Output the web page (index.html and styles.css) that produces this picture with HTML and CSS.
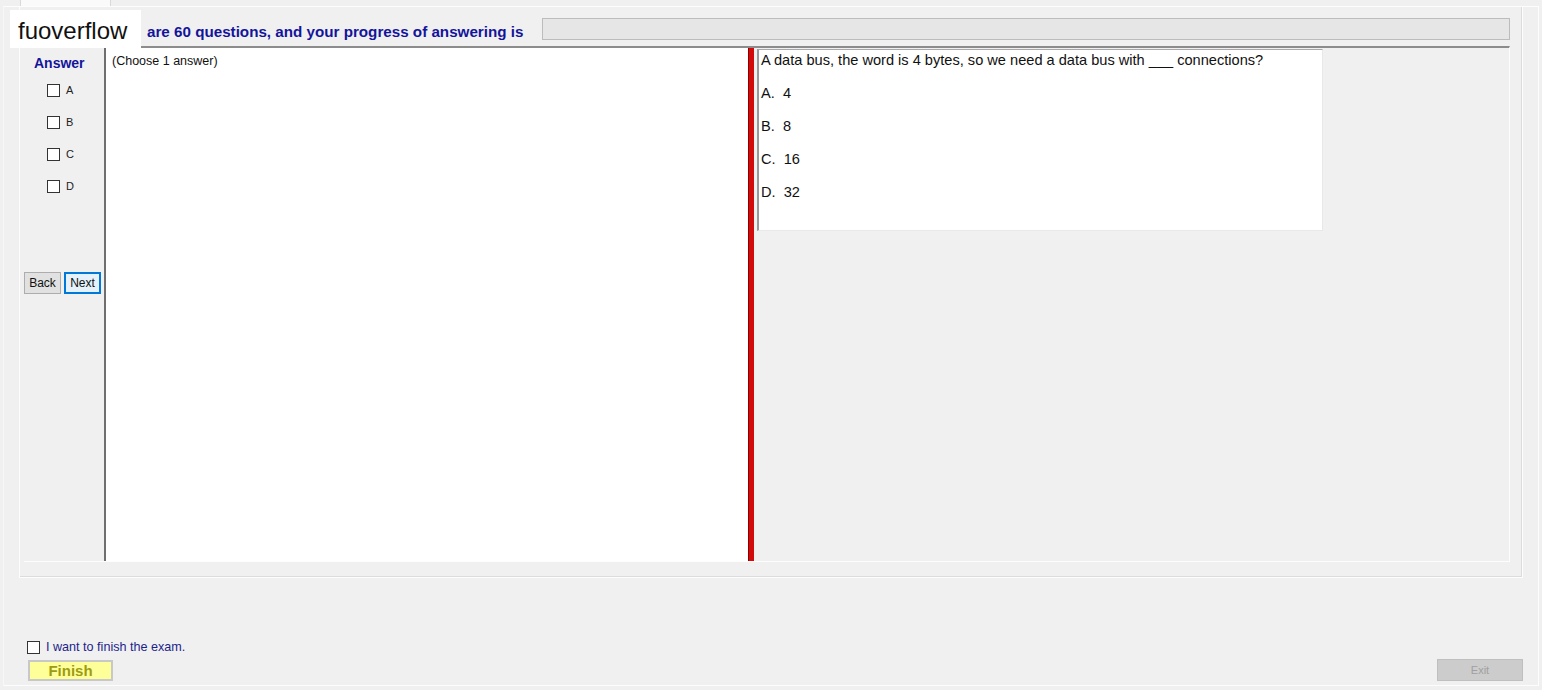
FILE: index.html
```html
<!DOCTYPE html>
<html>
<head>
  <title>Exam</title>
  <link rel="stylesheet" href="styles.css">
</head>
<body>
  <div class="tabstrip">
    <div class="tab"></div>
  </div>
  <div class="tabpage">
    <div class="group">
      <div class="header">
        <div class="title">are 60 questions, and your progress of answering is</div>
        <div class="progress"></div>
      </div>
      <div class="split">
        <div class="answer-panel">
          <div class="answer-title">Answer</div>
          <div class="options">
            <label class="option"><span class="box"></span>A</label>
            <label class="option"><span class="box"></span>B</label>
            <label class="option"><span class="box"></span>C</label>
            <label class="option"><span class="box"></span>D</label>
          </div>
          <div class="nav">
            <button class="btn">Back</button>
            <button class="btn focused">Next</button>
          </div>
        </div>
        <div class="answer-text">(Choose 1 answer)</div>
        <div class="splitter"></div>
        <div class="question-panel">
          <div class="question">
            <p>A data bus, the word is 4 bytes, so we need a data bus with ___ connections?</p>
            <p>A.&nbsp; 4</p>
            <p>B.&nbsp; 8</p>
            <p>C.&nbsp; 16</p>
            <p>D.&nbsp; 32</p>
          </div>
        </div>
      </div>
    </div>
    <div class="footer">
      <div class="finish-area">
        <label class="finish-check"><span class="box"></span>I want to finish the exam.</label>
        <button class="finish">Finish</button>
      </div>
      <button class="exit">Exit</button>
    </div>
  </div>
  <div class="watermark">fuoverflow</div>
</body>
</html>
```

FILE: styles.css
```css
body {
  margin: 0;
  background-color: #f0f0f0;
  font-family: "Liberation Sans", Arial, sans-serif;
  width: 1542px;
  height: 690px;
  overflow: hidden;
  position: relative;
}
.tabstrip {
  height: 6px;
  padding-left: 20px;
}
.tab {
  width: 89px;
  height: 6px;
  background-color: #fafafa;
  border-left: 1px solid #d9d9d9;
  border-right: 1px solid #d9d9d9;
}
.tabpage {
  margin: 0 3px;
  height: 680px;
  border-left: 1px solid #f7f7f7;
  border-right: 1px solid #fdfdfd;
  border-bottom: 1px solid #fdfdfd;
  border-top: 1px solid #fdfdfd;
  box-sizing: border-box;
  padding: 0 15px;
}
.group {
  height: 571px;
  box-sizing: border-box;
  border: 1px solid #fdfdfd;
  border-top: none;
  box-shadow: inset -1px -1px 0 #dcdcdc;
  padding: 11px 12px 0 4px;
}
.header {
  display: flex;
  height: 22px;
  align-items: center;
}
.title {
  flex: 1;
  padding-left: 123px;
  padding-top: 5px;
  font-size: 15.2px;
  font-weight: bold;
  color: #14149b;
  white-space: nowrap;
  overflow: hidden;
}
.progress {
  width: 966px;
  height: 20px;
  background-color: #e6e6e6;
  border: 1px solid #bcbcbc;
}
.split {
  display: flex;
  margin-top: 6px;
  height: 516px;
  box-sizing: border-box;
  border-top: 2px solid #8c8c8c;
  border-bottom: 1px solid #fdfdfd;
  border-right: 1px solid #fdfdfd;
}
.answer-panel {
  width: 80px;
  display: flex;
  flex-direction: column;
}
.answer-title {
  margin-top: 7px;
  line-height: 16px;
  padding-left: 10px;
  font-size: 14px;
  font-weight: bold;
  color: #14149b;
}
.options {
  margin-top: 3px;
}
.option {
  display: flex;
  align-items: center;
  height: 32px;
  padding-left: 23px;
  font-size: 11px;
  color: #222;
}
.box {
  width: 11px;
  height: 11px;
  border: 1px solid #333;
  background-color: #fff;
  margin-right: 6px;
}
.nav {
  margin-top: 70px;
  display: flex;
  gap: 3px;
}
.btn {
  width: 37px;
  height: 22px;
  padding: 0;
  font-family: "Liberation Sans", Arial, sans-serif;
  font-size: 12px;
  color: #111;
  background-color: #e1e1e1;
  border: 1px solid #adadad;
}
.btn.focused {
  border: 2px solid #0078d7;
  background-color: #e5f1fb;
}
.answer-text {
  width: 644px;
  box-sizing: border-box;
  background-color: #fff;
  border-left: 2px solid #6f6f6f;
  padding: 6px 6px;
  font-size: 12.5px;
  color: #111;
}
.splitter {
  width: 5px;
  background-color: #d20a0a;
  border-left: 1px solid #8a0000;
}
.question-panel {
  flex: 1;
  padding: 1px 0 0 3px;
}
.question {
  width: 566px;
  height: 182px;
  box-sizing: border-box;
  background-color: #fff;
  border-left: 2px solid #9a9a9a;
  border-top: 1px solid #a8a8a8;
  border-bottom: 1px solid #e8e8e8;
  border-right: 1px solid #e8e8e8;
  padding: 1px 2px;
  font-size: 14.6px;
  color: #111;
}
.question p {
  margin: 0 0 15px;
  line-height: 18px;
}
.footer {
  margin-top: 61px;
  display: flex;
  justify-content: space-between;
  align-items: flex-end;
}
.finish-area {
  margin-left: 8px;
}
.finish-check {
  display: flex;
  align-items: center;
  height: 16px;
  font-size: 12.6px;
  color: #1e1e8c;
}
.finish-check .box {
  width: 11px;
  height: 11px;
  margin-right: 6px;
}
.finish {
  margin-top: 5px;
  margin-left: 1px;
  width: 85px;
  height: 21px;
  padding: 0;
  background-color: #ffff99;
  border: 2px solid #c8c8c8;
  font-family: "Liberation Sans", Arial, sans-serif;
  font-size: 15px;
  font-weight: bold;
  color: #9c9c14;
}
.exit {
  width: 86px;
  height: 22px;
  padding: 0;
  background-color: #cccccc;
  border: 1px solid #bfbfbf;
  font-family: "Liberation Sans", Arial, sans-serif;
  font-size: 11px;
  color: #a0a0a0;
}
.watermark {
  position: absolute;
  left: 10px;
  top: 10px;
  width: 123px;
  height: 38px;
  padding-left: 8px;
  background-color: #fff;
  font-size: 24px;
  line-height: 42px;
  color: #111;
}
```
